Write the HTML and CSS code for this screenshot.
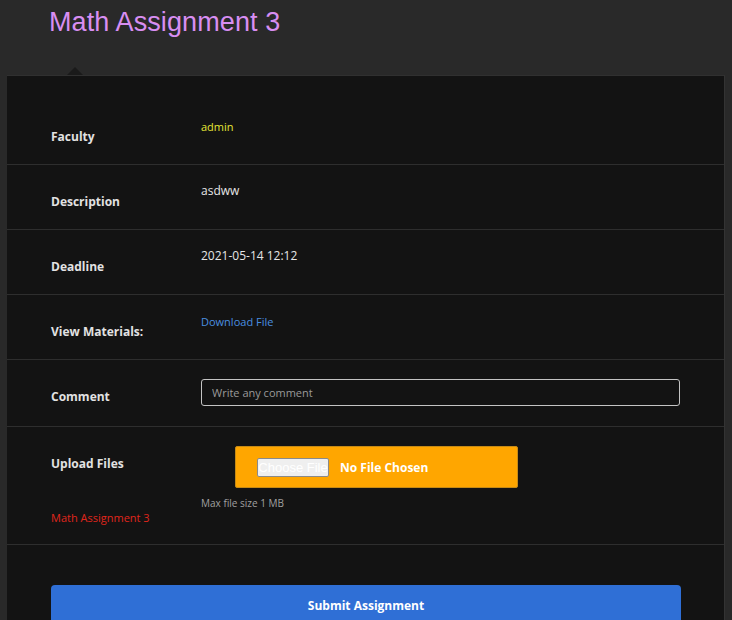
FILE: index.html
```html
<!DOCTYPE html>
<html>
<head>
<meta charset="utf-8">
<link rel="stylesheet" href="styles.css">
</head>
<body>
<header class="header">
  <h1 class="title">Math Assignment 3</h1>
</header>
<main class="panel">
  <div class="row">
    <div class="label">Faculty</div>
    <div class="value small faculty">admin</div>
  </div>
  <div class="row">
    <div class="label">Description</div>
    <div class="value">asdww</div>
  </div>
  <div class="row">
    <div class="label">Deadline</div>
    <div class="value">2021-05-14 12:12</div>
  </div>
  <div class="row">
    <div class="label">View Materials:</div>
    <div class="value small"><a class="link" href="#">Download File</a></div>
  </div>
  <div class="row row-comment">
    <div class="label">Comment</div>
    <div class="value field"><input class="comment" type="text" placeholder="Write any comment"></div>
  </div>
  <div class="row row-upload">
    <div class="label">
      <div>Upload Files</div>
      <div class="assign-name">Math Assignment 3</div>
    </div>
    <div class="value field">
      <div class="filebox">
        <span class="choose">Choose File</span>
        <span class="nofile">No File Chosen</span>
      </div>
      <div class="hint">Max file size 1 MB</div>
    </div>
  </div>
  <div class="actions">
    <button class="submit">Submit Assignment</button>
  </div>
</main>
</body>
</html>
```
FILE: styles.css
```css
html, body {
  margin: 0;
  padding: 0;
}
body {
  background: #292929;
  font-family: "Open Sans", "Liberation Sans", sans-serif;
  color: #dddddd;
  overflow: hidden;
}
.header {
  height: 75px;
  padding-left: 49px;
  box-sizing: border-box;
}
.title {
  margin: 0;
  padding-top: 4px;
  font-family: "Liberation Sans", sans-serif;
  font-weight: normal;
  font-size: 27px;
  line-height: 36px;
  color: #d88ef2;
  letter-spacing: 0.1px;
}
.panel {
  position: relative;
  margin-left: 7px;
  width: 718px;
  box-sizing: border-box;
  background: #131313;
  border-top: 1px solid #303030;
  border-right: 1px solid #333333;
  padding-top: 24px;
}
.panel::before {
  content: "";
  position: absolute;
  left: 60px;
  top: -9px;
  border-left: 8px solid transparent;
  border-right: 8px solid transparent;
  border-bottom: 8px solid #1a1a1a;
}
.row {
  display: grid;
  grid-template-columns: 150px 1fr;
  height: 64px;
  border-bottom: 1px solid #2e2e2e;
  padding-left: 44px;
}
.label {
  padding-top: 28px;
  font-size: 12px;
  font-weight: 700;
  line-height: 17px;
  color: #e2e2e2;
}
.value {
  padding-top: 17px;
  font-size: 12px;
  line-height: 17px;
  color: #e6e6e6;
}
.value.small {
  font-size: 11px;
  line-height: 16px;
  padding-top: 19px;
}
.faculty {
  color: #e6e636;
}
.link {
  color: #4a8fe0;
  text-decoration: none;
}
.row-comment {
  height: 66px;
}
.value.field {
  padding-top: 19px;
}
.comment {
  display: block;
  box-sizing: border-box;
  width: 479px;
  height: 27px;
  margin: 0;
  padding: 0 10px;
  background: #131313;
  border: 1px solid #c4c4c4;
  border-radius: 3px;
  color: #ddd;
  font-family: "Open Sans", sans-serif;
  font-size: 11px;
  outline: none;
}
.comment::placeholder {
  color: #9a9a9a;
}
.row-upload {
  height: 117px;
}
.assign-name {
  margin-top: 38px;
  font-size: 11px;
  font-weight: 400;
  line-height: 16px;
  color: #e0261c;
}
.filebox {
  display: flex;
  align-items: center;
  gap: 11px;
  box-sizing: border-box;
  width: 283px;
  height: 42px;
  margin-left: 34px;
  padding-left: 21px;
  background: #ffa600;
  border: 1px solid #c68a16;
  border-radius: 2px;
}
.choose {
  display: inline-block;
  box-sizing: border-box;
  width: 72px;
  height: 19px;
  background: #efefef;
  border: 1px solid #8a8a8a;
  border-radius: 2px;
  font-family: "Liberation Sans", sans-serif;
  font-size: 13px;
  line-height: 17px;
  text-align: center;
  color: #ffffff;
}
.nofile {
  font-size: 12px;
  font-weight: 700;
  color: #ffffff;
}
.hint {
  margin-top: 8px;
  font-size: 10px;
  line-height: 14px;
  color: #a0a0a0;
}
.actions {
  padding: 40px 0 0 44px;
}
.submit {
  display: block;
  width: 630px;
  height: 40px;
  border: none;
  border-radius: 4px;
  background: #2f6fd6;
  color: #ffffff;
  font-family: "Open Sans", sans-serif;
  font-size: 12px;
  font-weight: 700;
}
```
